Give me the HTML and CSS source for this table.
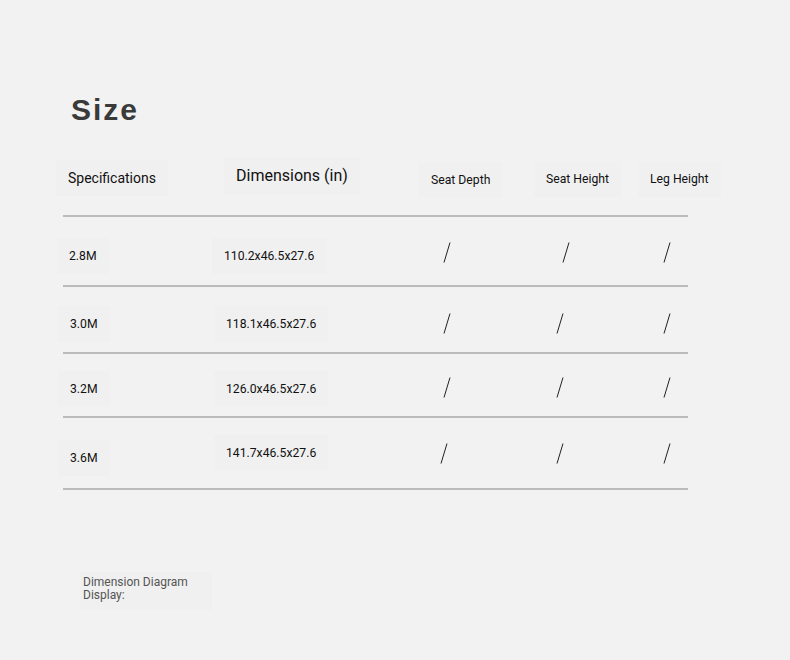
FILE: index.html
```html
<!DOCTYPE html>
<html lang="en">
<head>
<meta charset="utf-8">
<title>Size</title>
<link rel="stylesheet" href="styles.css">
</head>
<body>
<main class="page">
  <h1 class="title">Size</h1>
  <div class="table">
    <div class="row head">
      <div class="cell c1"><span class="chip">Specifications</span></div>
      <div class="cell c2"><span class="chip big">Dimensions (in)</span></div>
      <div class="cell c3"><span class="chip small">Seat Depth</span></div>
      <div class="cell c4"><span class="chip small">Seat Height</span></div>
      <div class="cell c5"><span class="chip small">Leg Height</span></div>
    </div>
    <div class="row r1">
      <div class="cell c1"><span class="chip">2.8M</span></div>
      <div class="cell c2"><span class="chip">110.2x46.5x27.6</span></div>
      <div class="cell c3 s"><svg class="slash" viewBox="0 0 8 21" width="8" height="21"><line x1="1" y1="20.5" x2="7" y2="0.5"/></svg></div>
      <div class="cell c4 s"><svg class="slash" viewBox="0 0 8 21" width="8" height="21"><line x1="1" y1="20.5" x2="7" y2="0.5"/></svg></div>
      <div class="cell c5 s"><svg class="slash" viewBox="0 0 8 21" width="8" height="21"><line x1="1" y1="20.5" x2="7" y2="0.5"/></svg></div>
    </div>
    <div class="row r2">
      <div class="cell c1"><span class="chip">3.0M</span></div>
      <div class="cell c2"><span class="chip">118.1x46.5x27.6</span></div>
      <div class="cell c3 s"><svg class="slash" viewBox="0 0 8 21" width="8" height="21"><line x1="1" y1="20.5" x2="7" y2="0.5"/></svg></div>
      <div class="cell c4 s"><svg class="slash" viewBox="0 0 8 21" width="8" height="21"><line x1="1" y1="20.5" x2="7" y2="0.5"/></svg></div>
      <div class="cell c5 s"><svg class="slash" viewBox="0 0 8 21" width="8" height="21"><line x1="1" y1="20.5" x2="7" y2="0.5"/></svg></div>
    </div>
    <div class="row r3">
      <div class="cell c1"><span class="chip">3.2M</span></div>
      <div class="cell c2"><span class="chip">126.0x46.5x27.6</span></div>
      <div class="cell c3 s"><svg class="slash" viewBox="0 0 8 21" width="8" height="21"><line x1="1" y1="20.5" x2="7" y2="0.5"/></svg></div>
      <div class="cell c4 s"><svg class="slash" viewBox="0 0 8 21" width="8" height="21"><line x1="1" y1="20.5" x2="7" y2="0.5"/></svg></div>
      <div class="cell c5 s"><svg class="slash" viewBox="0 0 8 21" width="8" height="21"><line x1="1" y1="20.5" x2="7" y2="0.5"/></svg></div>
    </div>
    <div class="row r4">
      <div class="cell c1"><span class="chip">3.6M</span></div>
      <div class="cell c2"><span class="chip">141.7x46.5x27.6</span></div>
      <div class="cell c3 s"><svg class="slash" viewBox="0 0 8 21" width="8" height="21"><line x1="1" y1="20.5" x2="7" y2="0.5"/></svg></div>
      <div class="cell c4 s"><svg class="slash" viewBox="0 0 8 21" width="8" height="21"><line x1="1" y1="20.5" x2="7" y2="0.5"/></svg></div>
      <div class="cell c5 s"><svg class="slash" viewBox="0 0 8 21" width="8" height="21"><line x1="1" y1="20.5" x2="7" y2="0.5"/></svg></div>
    </div>
  </div>
  <p class="note">Dimension Diagram<br>Display:</p>
</main>
</body>
</html>
```

FILE: styles.css
```css
* { box-sizing: border-box; }

html, body {
  margin: 0;
  padding: 0;
  background: #f2f2f2;
}

body {
  width: 790px;
  height: 660px;
  overflow: hidden;
  font-family: Roboto, "Liberation Sans", sans-serif;
  color: #111;
}

.page {
  padding-top: 93px;
}

.title {
  margin: 0 0 0 71px;
  font-family: "Liberation Sans", Arial, sans-serif;
  font-weight: 700;
  font-size: 30px;
  line-height: 34px;
  letter-spacing: 2px;
  color: #3a3a3a;
}

.table {
  margin: 30px 0 0 63px;
  width: 625px;
}

.row {
  display: grid;
  grid-template-columns: 155px 180px 112px 110px 68px;
  align-items: start;
  border-bottom: 2px solid #bbbbbb;
}

.cell {
  white-space: nowrap;
  font-size: 12.2px;
  line-height: 16px;
}

.chip {
  display: inline-block;
  background: #f0f0f0;
  padding: 10px 12px;
  margin: -10px -12px;
}

.row .c1 { padding-left: 7px; }
.row .c2 { padding-left: 8px; }
.r1 .c1 { padding-left: 6px; }
.r1 .c2 { padding-left: 6px; }

.row.head { height: 60px; }
.row.head .c1 { padding: 13px 0 0 5px; font-size: 14px; }
.row.head .c2 { padding: 10px 0 0 18px; }
.row.head .big { font-size: 16px; line-height: 18px; }
.row.head .c3 { padding: 15px 0 0 33px; }
.row.head .c4 { padding: 14px 0 0 36px; }
.row.head .c5 { padding: 14px 0 0 30px; }
.small { font-size: 12.2px; }

.r1 { height: 70px; --tp: 31px; --sp: 25px; }
.r2 { height: 67px; --tp: 29px; --sp: 26px; }
.r3 { height: 64px; --tp: 27px; --sp: 23px; }
.r4 { height: 72px; --tp: 32px; --sp: 25px; }

.r1 .cell, .r2 .cell, .r3 .cell, .r4 .cell { padding-top: var(--tp); }
.r4 .c2 { padding-top: 27px; }

.row .cell.s { padding-top: var(--sp); line-height: 0; }
.row .c3.s { padding-left: 45px; }
.row .c4.s { padding-left: 46px; }
.row .c5.s { padding-left: 43px; }
.r1 .c4.s { padding-left: 52px; }
.r4 .c3.s { padding-left: 42px; }

.slash {
  display: block;
  stroke: #222;
  stroke-width: 1;
  fill: none;
}

.note {
  display: inline-block;
  margin: 82px 0 0 80px;
  padding: 4px 24px 8px 3px;
  background: #f0f0f0;
  font-size: 12px;
  line-height: 13px;
  color: #555;
}
```
